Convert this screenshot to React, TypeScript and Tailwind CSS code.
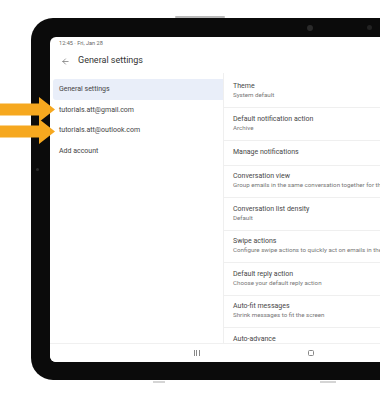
import { ArrowLeft } from "lucide-react";

const accounts = ["General settings", "tutorials.att@gmail.com", "tutorials.att@outlook.com", "Add account"];

const settings = [
  { title: "Theme", sub: "System default" },
  { title: "Default notification action", sub: "Archive" },
  { title: "Manage notifications" },
  { title: "Conversation view", sub: "Group emails in the same conversation together for threading" },
  { title: "Conversation list density", sub: "Default" },
  { title: "Swipe actions", sub: "Configure swipe actions to quickly act on emails in the list" },
  { title: "Default reply action", sub: "Choose your default reply action" },
  { title: "Auto-fit messages", sub: "Shrink messages to fit the screen" },
  { title: "Auto-advance", sub: "Show conversation list after you archive" },
];

function Arrow({ y }: { y: number }) {
  // orange callout arrow pointing right, tip at x=55
  return (
    <svg width="56" height="26" viewBox="0 0 56 26" className="absolute left-0" style={{ top: y }}>
      <polygon points="0,6.5 39,6.5 39,0 55,12.5 39,25 39,18.5 0,18.5" fill="#f6a81f" />
    </svg>
  );
}

export default function App() {
  return (
    <div
      className="relative w-[380px] h-[400px] overflow-hidden bg-white"
      style={{ fontFamily: "Roboto, 'Noto Sans', sans-serif" }}
    >
      {/* top button */}
      <div className="pt-[16px]">
        <div className="ml-[175px] w-[50px] h-[2px] rounded-full bg-[#b9b9b9]" />
      </div>

      {/* Device */}
      <div className="ml-[31px] w-[380px] h-[362px] bg-[#0b0b0b] rounded-[22px] pt-[19px] pl-[19px] pb-[18px] relative">
        <div className="absolute left-[276px] top-[7px] w-[6px] h-[6px] rounded-full bg-[#2a2a2a]" />
        <div className="absolute left-[336px] top-[7px] w-[5px] h-[5px] rounded-full bg-[#222]" />
        <div className="absolute left-[5px] top-[150px] w-[3px] h-[3px] rounded-full bg-[#2a2a2a]" />

        <div className="h-[325px] bg-white rounded-[6px] overflow-hidden flex flex-col">
          {/* status bar */}
          <div className="h-[12px] pl-[9px] flex items-center text-[5.6px] text-[#666]">12:45 · Fri, Jan 28</div>

          {/* header */}
          <div className="h-[24px] flex items-center pl-[11px]">
            <ArrowLeft size={9} strokeWidth={1.6} color="#555" />
            <span className="ml-[8px] text-[9px] text-[#333]">General settings</span>
          </div>

          {/* body */}
          <div className="flex-1 flex overflow-hidden">
            <div className="w-[173px] shrink-0 pt-[6px]">
              {accounts.map((a, i) => (
                <div
                  key={a}
                  className={`h-[20.7px] flex items-center pl-[6px] ml-[3px] text-[7px] text-[#444] ${
                    i === 0 ? "bg-[#e9eef9] rounded-l-[3px]" : ""
                  }`}
                >
                  {a}
                </div>
              ))}
            </div>

            <div className="flex-1 border-l border-[#efefef] pt-[2.5px]">
              {settings.map((s) => (
                <div
                  key={s.title}
                  className={`border-b border-[#efefef] pl-[9px] flex flex-col justify-center whitespace-nowrap ${
                    s.sub ? "h-[32.5px]" : "h-[25px]"
                  }`}
                >
                  <div className="text-[7px] leading-[9px] text-[#474747]">{s.title}</div>
                  {s.sub && <div className="text-[6.2px] leading-[9px] text-[#777]">{s.sub}</div>}
                </div>
              ))}
            </div>
          </div>

          {/* nav bar */}
          <div className="h-[19px] shrink-0 border-t border-[#f0f0f0] bg-white flex items-center">
            <div className="ml-[144px] flex gap-[1.5px]">
              <span className="w-[0.8px] h-[6px] bg-[#888]" />
              <span className="w-[0.8px] h-[6px] bg-[#888]" />
              <span className="w-[0.8px] h-[6px] bg-[#888]" />
            </div>
            <div className="ml-[109px] w-[6px] h-[6px] border border-[#888] rounded-[1.5px]" />
          </div>
        </div>
      </div>

      {/* bottom buttons */}
      <div className="flex mt-[1px]">
        <div className="ml-[153px] w-[12px] h-[1.5px] bg-[#d5d5d5]" />
        <div className="ml-[155px] w-[16px] h-[1.5px] bg-[#d5d5d5]" />
      </div>

      {/* callout arrows */}
      <Arrow y={96.5} />
      <Arrow y={118.5} />
    </div>
  );
}
